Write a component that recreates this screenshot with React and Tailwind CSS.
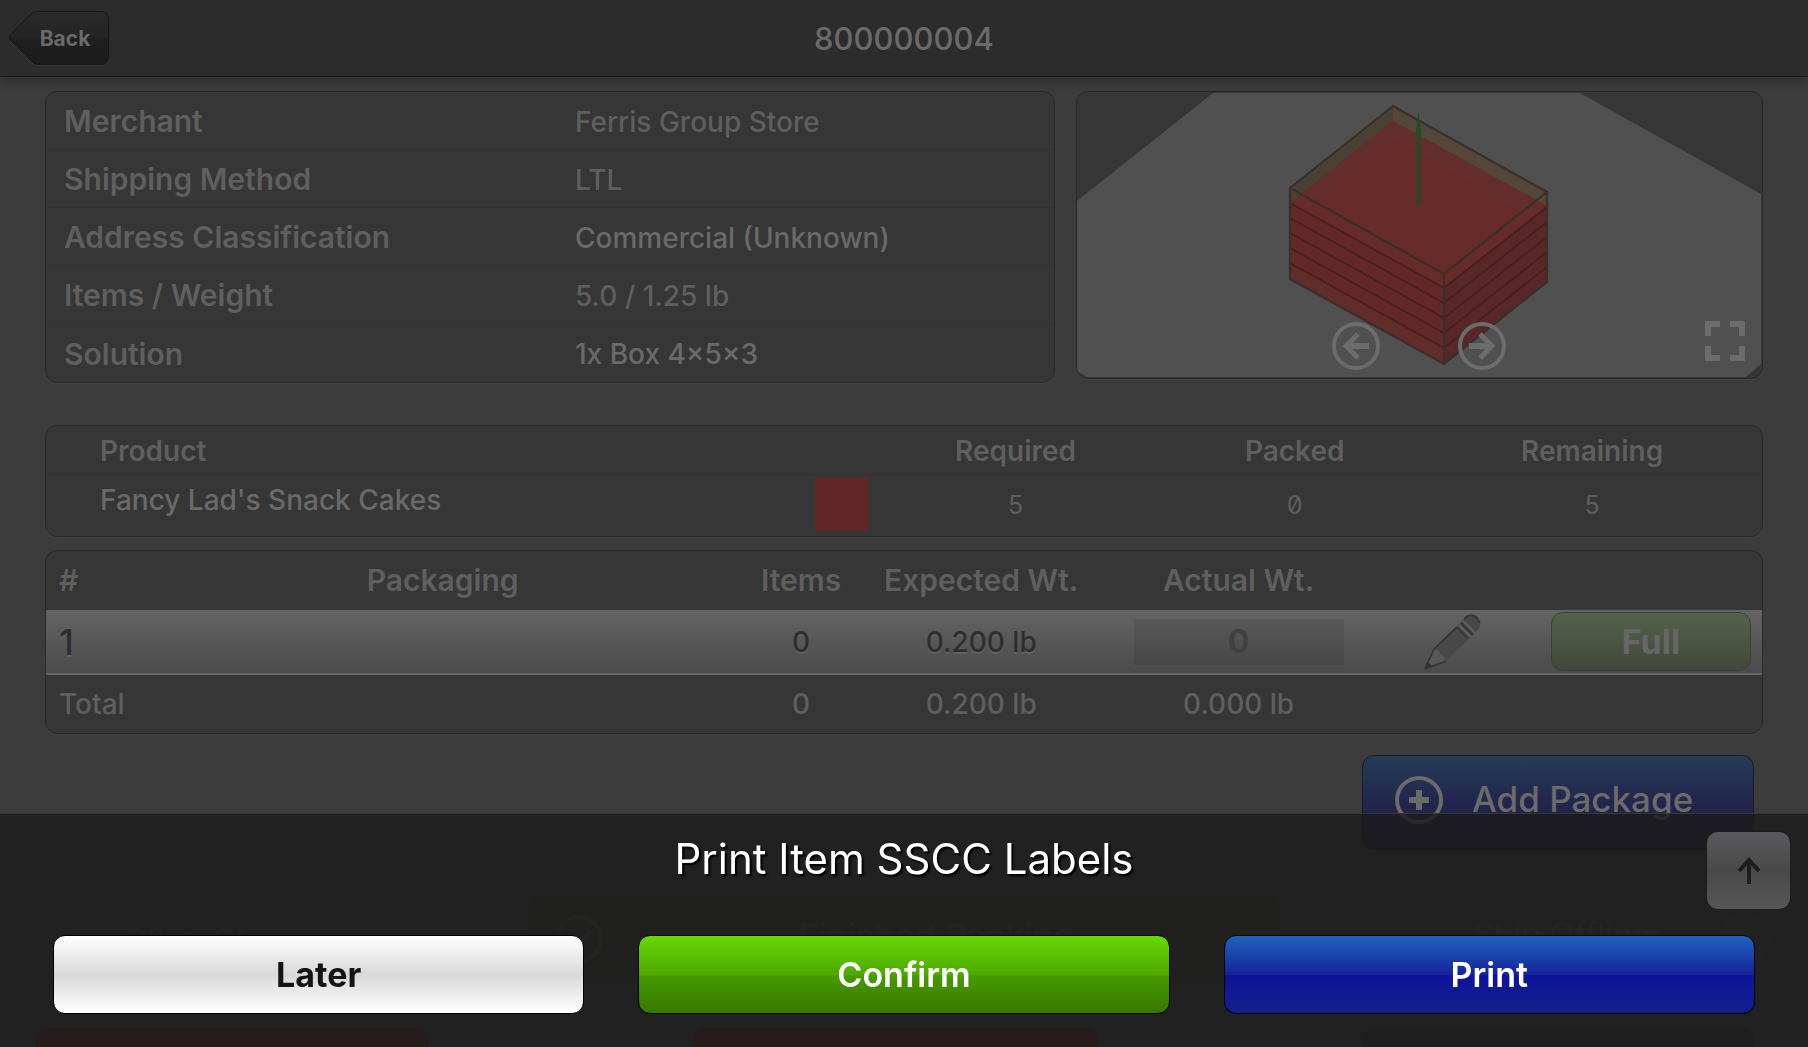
const details = [
  { label: 'Merchant', value: 'Ferris Group Store' },
  { label: 'Shipping Method', value: 'LTL' },
  { label: 'Address Classification', value: 'Commercial (Unknown)', strong: true },
  { label: 'Items / Weight', value: '5.0 / 1.25 lb' },
  { label: 'Solution', value: '1x Box 4×5×3', strong: true },
];

const layers = [0, 1, 2, 3, 4];

function Panel({ className = '', children }) {
  return (
    <div
      className={`overflow-hidden rounded-xl border border-[#292929] bg-[#363636] shadow-[0_1px_0_#444444] ${className}`}
    >
      {children}
    </div>
  );
}

function Header() {
  return (
    <header className="relative z-10 flex h-[77px] shrink-0 items-center justify-center border-b border-[#191919] bg-[#2c2c2c] pt-0.5 shadow-[0_2px_12px_rgba(0,0,0,0.3)]">
      <button className="absolute top-[11px] left-2 h-[55px] w-[102px] pr-1 pl-4 text-center text-[21px] font-bold text-[#6a6a6a]">
        <svg className="absolute inset-0" width="102" height="55" viewBox="0 0 102 55" aria-hidden="true">
          <defs>
            <linearGradient id="back" x1="0" y1="0" x2="0" y2="1">
              <stop offset="0" stopColor="#2b2b2b" />
              <stop offset="0.5" stopColor="#232323" />
              <stop offset="0.51" stopColor="#1f1f1f" />
              <stop offset="1" stopColor="#1c1c1c" />
            </linearGradient>
          </defs>
          <path
            d="M29 1.500H93Q100.500 1.500 100.500 9V46.500Q100.500 54.500 93 54.500H29Q25 54 22 50L2.500 30.500Q0 27.500 2.500 24.500L22 5Q25 1.500 29 1.500Z"
            fill="none"
            stroke="#3a3a3a"
          />
          <path
            d="M29 .5H93Q100.500 .5 100.500 8V45.500Q100.500 53.500 93 53.500H29Q25 53 22 49L2.500 29.500Q0 26.500 2.500 23.500L22 4Q25 .5 29 .5Z"
            fill="url(#back)"
            stroke="#161616"
          />
        </svg>
        <span className="relative">Back</span>
      </button>
      <h1 className="text-[31px] font-medium text-[#6a6a6a]">800000004</h1>
    </header>
  );
}

function CircleArrow({ label, flip }) {
  return (
    <button aria-label={label}>
      <svg width="50" height="50" viewBox="0 0 50 50" fill="none" stroke="#6c6c6c" className={flip ? 'rotate-180' : ''}>
        <circle cx="25" cy="25" r="22" strokeWidth="4" />
        <path d="M38 25H15" strokeWidth="6" />
        <path d="M27 13L15 25L27 37" strokeWidth="5" />
      </svg>
    </button>
  );
}

function PackingView() {
  return (
    <Panel className="relative h-[288px] flex-1">
      <svg className="h-full w-full" viewBox="0 0 685 286" preserveAspectRatio="none" role="img" aria-label="Packing solution">
        <path d="M0 109L136 1H503L684 102V272L669 285H10L0 279Z" fill="#505050" />

        {/* Carton with the open top */}
        <path d="M213 96L316 14L470 100V190L367 272L213 187Z" fill="#4b4035" />
        <path d="M316 14L470 100V116L316 30Z" fill="#54463a" />

        {/* Product stack */}
        <path d="M213 111L316 29L470 114L367 196Z" fill="#672b29" />
        <path d="M213 111L316 29L470 114L455 126L316 46L226 118Z" fill="#632e2b" />
        <path d="M213 111L367 195V272L213 187Z" fill="#642828" />
        <path d="M367 195L470 114V190L367 272Z" fill="#592727" />
        <path d="M213 172L367 257V272L213 187Z" fill="#622c2b" />
        <path d="M226 103L213 112L367 197L470 115L456 111L367 182Z" fill="#672b29" />
        {layers.map((i) => (
          <path
            key={i}
            d={`M213 ${111 + i * 15}L367 ${196 + i * 15}L470 ${115 + i * 15}`}
            fill="none"
            stroke="#45201f"
            strokeWidth="1.800"
          />
        ))}
        <path
          d="M213 96L316 14L470 100V190L367 272L213 187ZM213 96L367 182L470 100M367 182V272"
          fill="none"
          stroke="#39302a"
          strokeWidth="2.200"
        />

        {/* Up axis */}
        <path d="M341.500 45V114" stroke="#2b4726" strokeWidth="4" />
        <path d="M341.500 19L344.500 42L343 45H340L338.500 42Z" fill="#264b27" />
      </svg>
      <div className="absolute inset-x-0 bottom-[7px] flex justify-center gap-[76px] pr-px">
        <CircleArrow label="Previous" />
        <CircleArrow label="Next" flip />
      </div>
      <button aria-label="Full screen" className="absolute right-[17px] bottom-[17px]">
        <svg width="40" height="40" viewBox="0 0 40 40" fill="none" stroke="#6c6c6c" strokeWidth="6">
          <path d="M3 15V3H15M25 3H37V15M37 25V37H25M15 37H3V25" />
        </svg>
      </button>
    </Panel>
  );
}

function Products() {
  return (
    <Panel className="mt-[42px]">
      <table className="w-full table-fixed text-center text-[#5f5f5f]">
        <colgroup>
          <col className="w-[43%]" />
          <col className="w-[7%]" />
          <col className="w-[13%]" />
          <col className="w-[20%]" />
          <col />
        </colgroup>
        <thead className="text-[28px]">
          <tr className="h-12 border-b border-[#323232]">
            <th className="pt-0.5 pl-[54px] text-left font-semibold">Product</th>
            <th aria-label="Color" />
            <th className="pt-0.5 font-semibold">Required</th>
            <th className="pt-0.5 pr-2 font-semibold">Packed</th>
            <th className="pt-0.5 pr-12 font-semibold">Remaining</th>
          </tr>
        </thead>
        <tbody>
          <tr className="h-[62px] text-[25px] slashed-zero">
            <td className="pb-2.5 pl-[54px] text-left text-[28px] font-medium text-[#6a6a6a]">Fancy Lad's Snack Cakes</td>
            <td>
              <div className="mb-0.5 ml-[31px] size-[53px] bg-[#622726]" />
            </td>
            <td>5</td>
            <td className="pr-2">0</td>
            <td className="pr-12">5</td>
          </tr>
        </tbody>
      </table>
    </Panel>
  );
}

function Pencil() {
  return (
    <svg width="58" height="58" viewBox="0 0 58 58" aria-hidden="true">
      <path d="M1 56L10 36L40 6Q47-1 53 5Q59 12 53 18L23 47Z" fill="#484848" />
      <path d="M3 54L10 37L12 36L21 45L22 48Z" fill="#575857" />
      <path
        d="M1 56L10 36L33 14M1 56L22 48M40 6Q47-1 53 5L56 10M33 14L44 26M37 10L49 22"
        fill="none"
        stroke="#363636"
        strokeWidth="1.800"
      />
      <path d="M35 12L47 24M39 8L51 20" fill="none" stroke="#606060" strokeWidth="2" />
      <path d="M1 56L4 49L8 53Z" fill="#333333" />
    </svg>
  );
}

function Packages() {
  return (
    <Panel className="mt-[13px]">
      <table className="w-full table-fixed text-center text-[28px] font-medium whitespace-nowrap text-[#5f5f5f]">
        <colgroup>
          <col className="w-[6%]" />
          <col className="w-[34%]" />
          <col className="w-[8%]" />
          <col className="w-[13%]" />
          <col className="w-[17%]" />
          <col className="w-[8%]" />
          <col className="w-[14%]" />
        </colgroup>
        <thead>
          <tr className="h-[59px] text-[30px]">
            <th className="pl-[13px] text-left font-semibold">#</th>
            <th className="pl-1 font-semibold">Packaging</th>
            <th className="font-semibold">Items</th>
            <th className="font-semibold">Expected Wt.</th>
            <th className="font-semibold">Actual Wt.</th>
            <th aria-label="Edit" />
            <th aria-label="Status" />
          </tr>
        </thead>
        <tbody>
          <tr className="h-[64px] border-b border-[#666666] bg-linear-to-b from-[#646464] to-[#4a4b4a] text-[#2e2e2e] [text-shadow:0_2px_0_#626262]">
            <td className="pl-[13px] text-left text-[36px] leading-10">1</td>
            <td />
            <td>0</td>
            <td>0.200 lb</td>
            <td>
              <input
                aria-label="Actual weight"
                placeholder="0"
                className="mx-auto block h-[46px] w-[210px] bg-black/8 text-center text-[32px] font-bold placeholder:text-[#404040]"
              />
            </td>
            <td>
              <button aria-label="Edit package" className="mx-auto block">
                <Pencil />
              </button>
            </td>
            <td>
              <button className="mr-[11px] ml-auto block h-[59px] w-[200px] rounded-xl border border-[#3a4134] bg-linear-to-b from-[#53624a] to-[#42483a] text-[34px] font-bold text-[#676767] text-shadow-none">
                Full
              </button>
            </td>
          </tr>
        </tbody>
        <tfoot>
          <tr className="h-[59px]">
            <td className="pl-[13px] text-left">Total</td>
            <td />
            <td>0</td>
            <td>0.200 lb</td>
            <td>0.000 lb</td>
            <td />
            <td />
          </tr>
        </tfoot>
      </table>
    </Panel>
  );
}

function Actions() {
  return (
    <div>
      <div className="mt-[21px] flex justify-end pr-[9px]">
        <button className="flex h-[95px] w-[392px] items-center rounded-xl border border-[#1b1b22] bg-linear-to-b from-[#243c58] via-[#22264c] via-50% to-[#20203f] pb-[6px] pl-[31px] text-[35px] font-medium text-[#6b6b6b]">
          <svg width="50" height="50" viewBox="0 0 50 50" fill="none" stroke="currentColor" className="mr-[28px]">
            <circle cx="25" cy="25" r="22" strokeWidth="4" />
            <path d="M25 15V35M15 25H35" strokeWidth="6" />
          </svg>
          Add Package
        </button>
      </div>
      <div className="mt-[45px] grid grid-cols-[484px_1fr_484px] items-center text-[34px] font-medium text-[#505050]">
        <span className="flex items-center gap-5 pl-[84px] text-[28px]">
          <span>00</span>
          <span>:</span>
          <span>24</span>
        </span>
        <button className="flex h-[88px] items-center rounded-xl border border-[#363a33] bg-[#3a4034] pl-[25px] text-[#4a4b4a]">
          <svg width="48" height="48" viewBox="0 0 48 48" fill="none" stroke="currentColor">
            <circle cx="24" cy="24" r="22" strokeWidth="4" />
            <path d="M14 24L22 32L35 16" strokeWidth="5" />
          </svg>
          <span className="flex-1 pr-2 pb-2">Finished Packing</span>
        </button>
        <div className="flex items-center justify-end gap-[58px]">
          <span className="pb-2 text-[32px]">Ship Offline:</span>
          <span className="-mr-2 size-[52px] rounded-full bg-[#454545]" />
        </div>
      </div>
      <div className="mt-[45px] -ml-[9px] flex justify-between pr-[9px]">
        <div className="h-24 w-[392px] rounded-xl border border-[#3a2424] bg-[#5a2424]" />
        <div className="h-24 w-[405px] rounded-xl border border-[#3a2424] bg-[#5a2424]" />
        <div className="h-24 w-[392px] rounded-xl border border-[#363636] bg-[#303030]" />
      </div>
    </div>
  );
}

function LabelSheet() {
  return (
    <section
      aria-labelledby="sheet-title"
      className="fixed inset-x-0 bottom-0 z-20 border-t border-[#373737] bg-[#1b1b1b]/82 px-[53px] pt-[18px] pb-[33px]"
    >
      <h2 id="sheet-title" className="text-center text-[42px] leading-[54px] text-white [text-shadow:2px_2px_2px_#000]">
        Print Item SSCC Labels
      </h2>
      <div className="mt-[49px] grid grid-cols-3 gap-[54px] text-[34px] font-semibold text-white">
        <button className="h-[79px] rounded-xl border border-black bg-linear-to-b from-white via-[#d9d9d9] to-white font-bold text-[#141414]">
          Later
        </button>
        <button className="h-[79px] rounded-xl border border-black bg-[linear-gradient(#66d906,#4fa802_50%,#479a02_52%,#377800)]">
          Confirm
        </button>
        <button className="h-[79px] rounded-xl border border-black bg-[linear-gradient(#1f63bb,#15229b_51%,#0e149b_51%,#13208a)]">
          Print
        </button>
      </div>
    </section>
  );
}

export default function App() {
  return (
    <div className="flex h-screen flex-col overflow-hidden bg-[#3c3c3c] font-[Inter,sans-serif]">
      <Header />
      <main className="px-[45px] pt-[14px]">
        <div className="flex items-start gap-[21px]">
          <Panel className="w-[1010px]">
            <dl className="divide-y divide-[#323232]">
              {details.map((row) => (
                <div key={row.label} className="flex h-[58px] items-center pt-0.5 pl-[18px]">
                  <dt className="w-[511px] text-[30px] font-semibold text-[#5f5f5f]">{row.label}</dt>
                  <dd className={`text-[28px] font-medium ${row.strong ? 'text-[#6a6a6a]' : 'text-[#5f5f5f]'}`}>{row.value}</dd>
                </div>
              ))}
            </dl>
          </Panel>
          <PackingView />
        </div>
        <Products />
        <Packages />
        <Actions />
      </main>
      <LabelSheet />
      <button
        aria-label="Scroll to top"
        className="fixed right-[17px] bottom-[137px] z-30 flex h-[79px] w-[85px] items-center justify-center rounded-xl border border-[#1c1c1c] bg-linear-to-b from-[#5a5a5c] via-[#494949] to-[#565656]"
      >
        <svg width="24" height="28" viewBox="0 0 24 28" fill="none" stroke="#1d1d1d" strokeWidth="4">
          <path d="M12 27V4M2 14L12 3L22 14" />
        </svg>
      </button>
    </div>
  );
}
